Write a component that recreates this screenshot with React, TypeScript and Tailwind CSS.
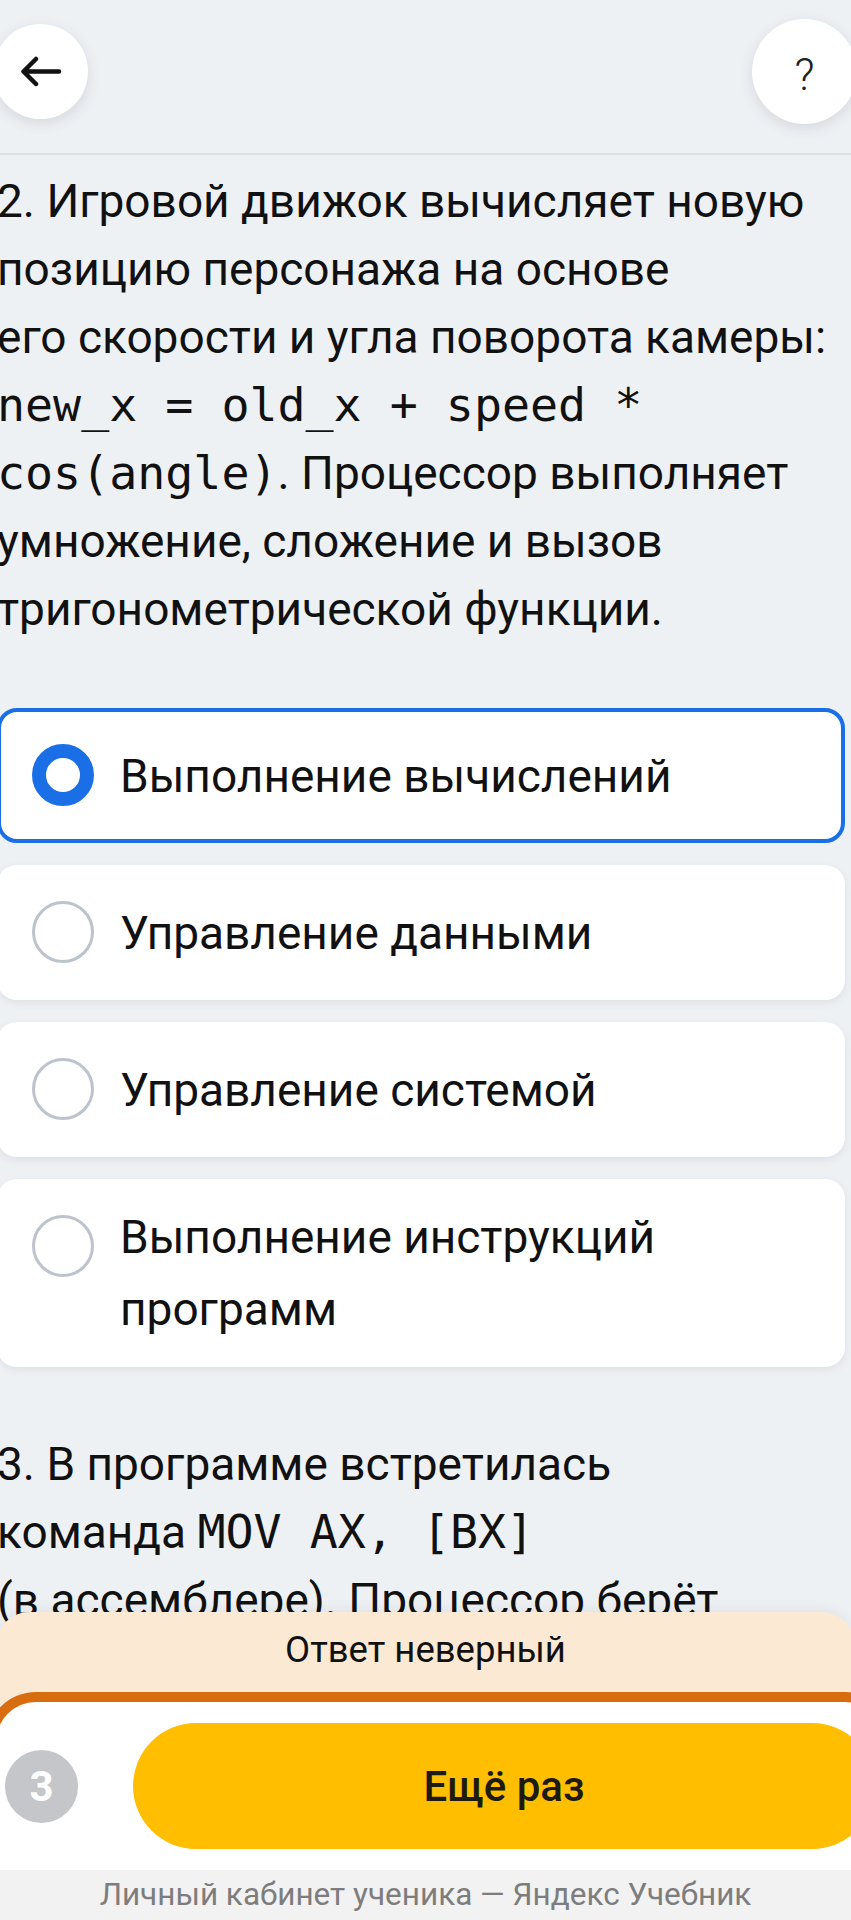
import React, { useState } from 'react'

interface Option {
  id: string
  label: string
}

const options: Option[] = [
  { id: 'calc', label: 'Выполнение вычислений' },
  { id: 'data', label: 'Управление данными' },
  { id: 'system', label: 'Управление системой' },
  { id: 'program', label: 'Выполнение инструкций программ' },
]

const mono = "font-['DejaVu_Sans_Mono',monospace] text-[46.6px]"

export default function App() {
  const [selected, setSelected] = useState('calc')

  return (
    <div className="relative h-[1920px] w-full overflow-hidden bg-[#eef1f4] font-['Roboto',sans-serif] text-[#111]">
      {/* Header */}
      <header className="flex items-start justify-between border-b-2 border-[#dde1e5] pt-[19px] pb-[29px]">
        <button className="-ml-[7px] mt-[5px] flex h-[95px] w-[95px] items-center justify-center rounded-full bg-white shadow-[0_4px_14px_rgba(40,50,70,0.13)]">
          <svg width="42" height="31" viewBox="0 0 42 31" fill="none" stroke="#111" strokeWidth="4.5" strokeLinecap="round" strokeLinejoin="round">
            <path d="M39 15.5H4M16 3 3.5 15.5 16 28" />
          </svg>
        </button>
        <button className="-mr-[6px] flex h-[105px] w-[105px] items-center justify-center rounded-full bg-white pt-[6px] text-[44px] font-light leading-none text-[#222] shadow-[0_4px_14px_rgba(40,50,70,0.13)]">
          ?
        </button>
      </header>

      <main className="-ml-[3px] w-[848px]">
        {/* Question 2 */}
        <p className="mt-[12px] text-[46px] leading-[68px]">
          2. Игровой движок вычисляет новую
          <br />
          позицию персонажа на основе
          <br />
          его скорости и угла поворота камеры:
          <br />
          <code className={mono}>
            new_x = old_x + speed *
            <br />
            cos(angle)
          </code>
          . Процессор выполняет
          <br />
          умножение, сложение и вызов
          <br />
          тригонометрической функции.
        </p>

        {/* Answers */}
        <div className="mt-[65px] flex flex-col gap-[22px]">
          {options.map((opt) => {
            const isSel = opt.id === selected
            return (
              <button
                key={opt.id}
                onClick={() => setSelected(opt.id)}
                className={`flex min-h-[135px] w-full items-center gap-[26px] rounded-[20px] border-4 bg-white py-[18px] pl-[31px] pr-[20px] text-left ${
                  isSel ? 'border-[#1a6fe6]' : 'border-transparent shadow-[0_3px_8px_rgba(30,40,60,0.08)]'
                }`}
              >
                <span
                  className={`mt-[14px] h-[62px] w-[62px] shrink-0 self-start rounded-full bg-white ${
                    isSel ? 'border-[14px] border-[#1a6fe6]' : 'border-[3px] border-[#bcc3cd]'
                  }`}
                />
                <span className="text-[46px] leading-[72px]">{opt.label}</span>
              </button>
            )
          })}
        </div>

        {/* Question 3 */}
        <p className="mt-[63px] text-[46px] leading-[68px]">
          3. В программе встретилась
          <br />
          команда <code className={mono}>MOV AX, [BX]</code>
          <br />
          (в ассемблере). Процессор берёт
          <br />
          значение из памяти по адресу,
          <br />
          который хранится в регистре BX.
        </p>
      </main>

      {/* Result sheet */}
      <div className="absolute inset-x-0 bottom-0">
        <div className="-mx-[3px] h-[130px] rounded-t-[32px] bg-[#fce9d3] pt-[18px] text-center text-[36.5px] leading-[40px] shadow-[0_-4px_12px_rgba(0,0,0,0.05)]">
          Ответ неверный
        </div>
        <div className="relative -ml-[14px] -mt-[50px] w-[909px] rounded-t-[50px] border-[10px] border-b-0 border-[#d86d10] bg-white">
          <div className="flex items-center py-[21px] pl-[9px]">
            <div className="flex h-[73px] w-[73px] shrink-0 items-center justify-center rounded-full bg-[#c4c6c9] text-[42px] font-bold text-white">
              3
            </div>
            <button className="ml-[55px] h-[126px] w-[742px] shrink-0 rounded-full bg-[#ffbe00] text-[42px] font-medium text-[#1d1a12]">
              Ещё раз
            </button>
          </div>
        </div>
        <div className="flex h-[50px] items-center justify-center bg-[#f2f2f2] text-[31.5px] text-[#7d7d7d]">
          Личный кабинет ученика — Яндекс Учебник
        </div>
      </div>
    </div>
  )
}
